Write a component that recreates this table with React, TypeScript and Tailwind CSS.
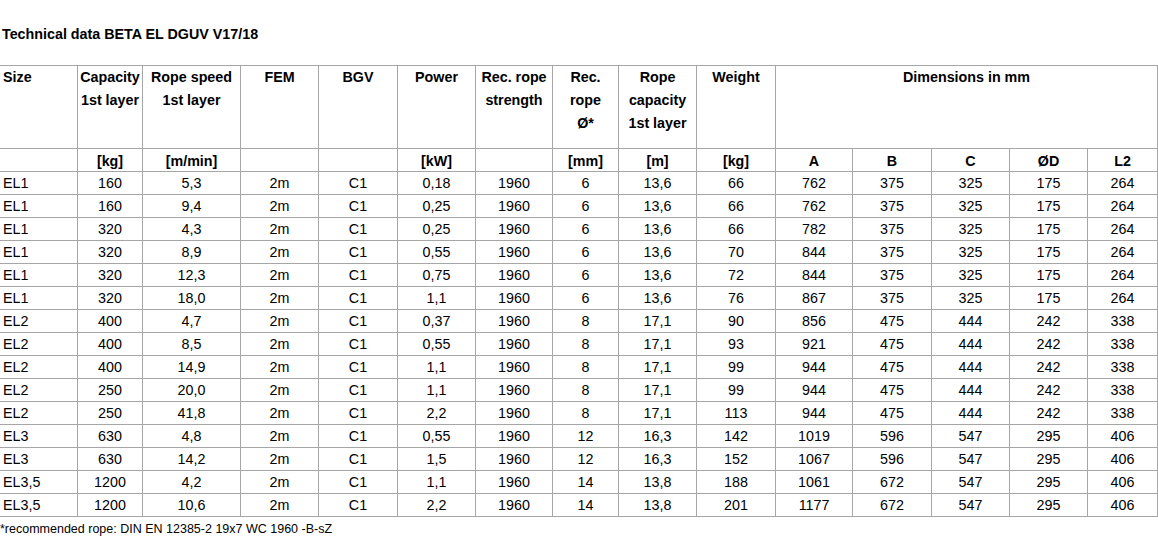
const COLS = "grid-cols-[78px_65px_98px_78px_79px_78px_77px_66px_78px_79px_77px_79px_78px_78px_70px]";

const HEADERS: string[][] = [
  ["Size"],
  ["Capacity", "1st layer"],
  ["Rope speed", "1st layer"],
  ["FEM"],
  ["BGV"],
  ["Power"],
  ["Rec. rope", "strength"],
  ["Rec.", "rope", "Ø*"],
  ["Rope", "capacity", "1st layer"],
  ["Weight"],
];

const UNITS = ["", "[kg]", "[m/min]", "", "", "[kW]", "", "[mm]", "[m]", "[kg]", "A", "B", "C", "ØD", "L2"];

const ROWS: string[][] = [
  ["EL1", "160", "5,3", "2m", "C1", "0,18", "1960", "6", "13,6", "66", "762", "375", "325", "175", "264"],
  ["EL1", "160", "9,4", "2m", "C1", "0,25", "1960", "6", "13,6", "66", "762", "375", "325", "175", "264"],
  ["EL1", "320", "4,3", "2m", "C1", "0,25", "1960", "6", "13,6", "66", "782", "375", "325", "175", "264"],
  ["EL1", "320", "8,9", "2m", "C1", "0,55", "1960", "6", "13,6", "70", "844", "375", "325", "175", "264"],
  ["EL1", "320", "12,3", "2m", "C1", "0,75", "1960", "6", "13,6", "72", "844", "375", "325", "175", "264"],
  ["EL1", "320", "18,0", "2m", "C1", "1,1", "1960", "6", "13,6", "76", "867", "375", "325", "175", "264"],
  ["EL2", "400", "4,7", "2m", "C1", "0,37", "1960", "8", "17,1", "90", "856", "475", "444", "242", "338"],
  ["EL2", "400", "8,5", "2m", "C1", "0,55", "1960", "8", "17,1", "93", "921", "475", "444", "242", "338"],
  ["EL2", "400", "14,9", "2m", "C1", "1,1", "1960", "8", "17,1", "99", "944", "475", "444", "242", "338"],
  ["EL2", "250", "20,0", "2m", "C1", "1,1", "1960", "8", "17,1", "99", "944", "475", "444", "242", "338"],
  ["EL2", "250", "41,8", "2m", "C1", "2,2", "1960", "8", "17,1", "113", "944", "475", "444", "242", "338"],
  ["EL3", "630", "4,8", "2m", "C1", "0,55", "1960", "12", "16,3", "142", "1019", "596", "547", "295", "406"],
  ["EL3", "630", "14,2", "2m", "C1", "1,5", "1960", "12", "16,3", "152", "1067", "596", "547", "295", "406"],
  ["EL3,5", "1200", "4,2", "2m", "C1", "1,1", "1960", "14", "13,8", "188", "1061", "672", "547", "295", "406"],
  ["EL3,5", "1200", "10,6", "2m", "C1", "2,2", "1960", "14", "13,8", "201", "1177", "672", "547", "295", "406"],
];

const cell = "border-r border-b border-[#a6a6a6] whitespace-nowrap";

export default function App() {
  return (
    <div className="w-[1158px] h-[542px] bg-white text-black font-['Liberation_Sans',Arial,sans-serif] text-[14.3px]">
      <div className="pt-[24px] pl-[2px] mb-[21px] leading-[20px] font-bold">Technical data BETA EL DGUV V17/18</div>

      <div className={`grid ${COLS} border-t border-[#a6a6a6]`}>
        {/* header row */}
        {HEADERS.map((lines, i) => (
          <div
            key={`h${i}`}
            className={`${cell} h-[83px] font-bold leading-[23px] ${i === 0 ? "text-left pl-[3px]" : "text-center"}`}
          >
            {lines.map((l) => (
              <div key={l}>{l}</div>
            ))}
          </div>
        ))}
        <div className={`${cell} col-span-5 h-[83px] font-bold leading-[23px] text-center`}>Dimensions in mm</div>

        {/* units row */}
        {UNITS.map((u, i) => (
          <div key={`u${i}`} className={`${cell} h-[23px] pt-[2px] font-bold leading-[20px] text-center`}>
            {u}
          </div>
        ))}

        {/* data rows */}
        {ROWS.map((row, r) =>
          row.map((v, i) => (
            <div
              key={`r${r}c${i}`}
              className={`${cell} h-[23px] leading-[22px] ${i === 0 ? "text-left pl-[3px]" : "text-center"}`}
            >
              {v}
            </div>
          ))
        )}
      </div>

      <div className="pt-[4px] text-[12.5px] leading-[16px]">
        *recommended rope: DIN EN 12385-2 19x7 WC 1960 -B-sZ
      </div>
    </div>
  );
}
